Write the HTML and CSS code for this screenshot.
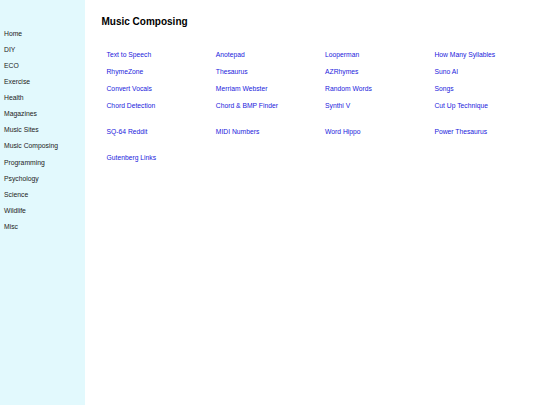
FILE: index.html
```html
<!DOCTYPE html>
<html>
<head>
<meta charset="utf-8">
<link rel="stylesheet" href="styles.css">
</head>
<body>
<div class="layout">
  <nav class="sidebar">
    <a class="nav-item" href="#">Home</a>
    <a class="nav-item" href="#">DIY</a>
    <a class="nav-item" href="#">ECO</a>
    <a class="nav-item" href="#">Exercise</a>
    <a class="nav-item" href="#">Health</a>
    <a class="nav-item" href="#">Magazines</a>
    <a class="nav-item" href="#">Music Sites</a>
    <a class="nav-item" href="#">Music Composing</a>
    <a class="nav-item" href="#">Programming</a>
    <a class="nav-item" href="#">Psychology</a>
    <a class="nav-item" href="#">Science</a>
    <a class="nav-item" href="#">Wildlife</a>
    <a class="nav-item" href="#">Misc</a>
  </nav>
  <main class="content">
    <h1 class="title">Music Composing</h1>
    <div class="links">
      <a href="#">Text to Speech</a>
      <a href="#">Anotepad</a>
      <a href="#">Looperman</a>
      <a href="#">How Many Syllables</a>
      <a href="#">RhymeZone</a>
      <a href="#">Thesaurus</a>
      <a href="#">AZRhymes</a>
      <a href="#">Suno AI</a>
      <a href="#">Convert Vocals</a>
      <a href="#">Merriam Webster</a>
      <a href="#">Random Words</a>
      <a href="#">Songs</a>
      <a href="#">Chord Detection</a>
      <a href="#">Chord &amp; BMP Finder</a>
      <a href="#">Synthi V</a>
      <a href="#">Cut Up Technique</a>
    </div>
    <div class="links section">
      <a href="#">SQ-64 Reddit</a>
      <a href="#">MIDI Numbers</a>
      <a href="#">Word Hippo</a>
      <a href="#">Power Thesaurus</a>
    </div>
    <div class="links section">
      <a href="#">Gutenberg Links</a>
    </div>
  </main>
</div>
</body>
</html>
```
FILE: styles.css
```css
html, body {
  margin: 0;
  padding: 0;
  height: 100%;
}
body {
  font-family: "Liberation Sans", Arial, sans-serif;
  background: #ffffff;
}
.layout {
  display: flex;
  min-height: 100%;
}
.sidebar {
  width: 85px;
  flex: none;
  background: #e2f9fd;
  padding-top: 25.9px;
  display: flex;
  flex-direction: column;
  box-sizing: border-box;
}
.nav-item {
  display: block;
  padding-left: 4px;
  font-size: 6.8px;
  line-height: 16.08px;
  color: #222222;
  text-decoration: none;
  white-space: nowrap;
}
.content {
  flex: 1;
  padding-left: 16.5px;
  min-width: 0;
}
.title {
  margin: 16.3px 0 0 0;
  font-size: 10px;
  line-height: 11.5px;
  font-weight: bold;
  color: #000000;
}
.links {
  display: grid;
  grid-template-columns: 109.3px 109.3px 109.3px 1fr;
  padding-left: 5px;
  margin-top: 19.2px;
}
.links.section {
  margin-top: 9.1px;
}
.links a {
  font-size: 6.75px;
  line-height: 16.9px;
  color: #1a1adc;
  text-decoration: none;
  white-space: nowrap;
}
```
